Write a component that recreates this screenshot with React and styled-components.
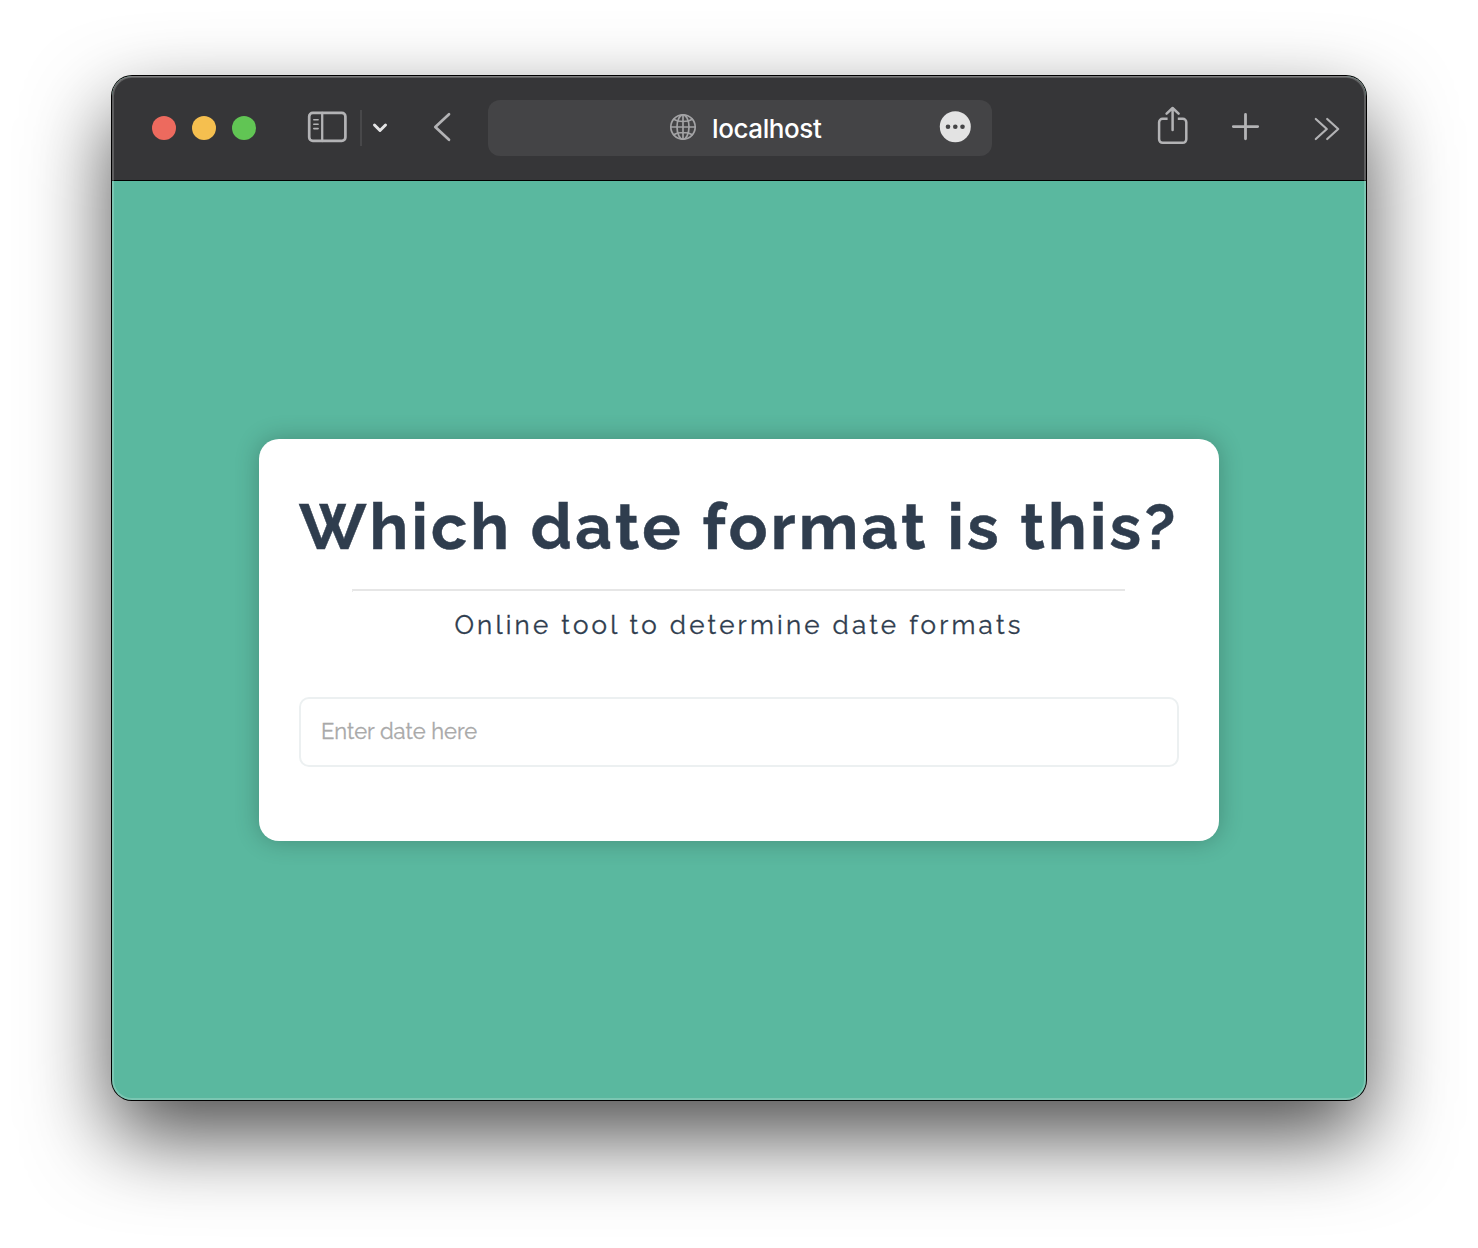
import React from "react";
import styled, { createGlobalStyle } from "styled-components";

const Global = createGlobalStyle`
  * { box-sizing: border-box; }
  body { margin: 0; background: #fff; font-family: Raleway, Lato, sans-serif; }
`;
const Desktop = styled.div`
  width: 1478px;
  height: 1248px;
  padding: 76px 112px 148px;
  overflow: hidden;
  background: #fff;
`;
const Window = styled.main`
  position: relative;
  display: flex;
  flex-direction: column;
  height: 1024px;
  border-radius: 20px;
  background: #5ab89f;
  box-shadow: 0 0 0 1px #000, 0 36px 84px rgba(0, 0, 0, 0.7);
  &::after {
    content: "";
    position: absolute;
    inset: 0;
    border-radius: 20px;
    pointer-events: none;
    box-shadow: inset 0 0 0 2px rgba(255, 255, 255, 0.2), inset 0 1px 0 rgba(255, 255, 255, 0.2);
  }
`;
const Toolbar = styled.header`
  display: flex;
  align-items: flex-start;
  height: 105px;
  flex: none;
  padding: 24px 22px 0 40px;
  border-bottom: 1px solid #000;
  border-radius: 20px 20px 0 0;
  background: #363638;
`;
const Lights = styled.div`
  display: flex;
  gap: 16px;
  padding-top: 16px;
`;
const Light = styled.span`
  width: 24px;
  height: 24px;
  border-radius: 50%;
  background: ${(p) => p.$color};
`;
const Icon = styled.svg`
  flex: none;
  display: block;
  width: ${(p) => p.$w}px;
  height: 56px;
  margin-left: ${(p) => p.$gap || 0}px;
  fill: none;
  stroke: ${(p) => p.$color || "#b3b3b5"};
  stroke-width: ${(p) => p.$stroke || 2.5};
  stroke-linecap: round;
  stroke-linejoin: round;
`;
const Divider = styled.span`
  flex: none;
  width: 2px;
  height: 36px;
  margin: 10px 0 0 13px;
  background: #48484a;
`;
const Address = styled.div`
  display: flex;
  flex: none;
  width: 504px;
  height: 56px;
  margin-left: 34px;
  border-radius: 12px;
  background: #444446;
`;
const Host = styled.span`
  width: 115px;
  margin-left: 15px;
  color: #fff;
  font: 500 26px/58px Inter, sans-serif;
  letter-spacing: -0.4px;
  white-space: nowrap;
`;
const Page = styled.section`
  display: flex;
  flex: 1;
  align-items: center;
  justify-content: center;
`;
const Card = styled.div`
  width: 960px;
  height: 402px;
  margin-bottom: 1px;
  padding: 40px;
  border-radius: 20px;
  background: #fff;
  color: #2f3d4e;
  box-shadow: 0 0 24px rgba(0, 0, 0, 0.24);
`;
const Title = styled.h1`
  height: 110px;
  margin: 0;
  font-size: 64px;
  line-height: 95px;
  font-weight: 700;
  letter-spacing: 3.2px;
  white-space: nowrap;
  -webkit-text-stroke: 0.5px currentColor;
`;
const Rule = styled.hr`
  width: 773px;
  height: 3px;
  margin: 0 0 0 53px;
  border: 0 solid #e6e6e6;
  border-top-width: 2px;
  border-left: 1px solid #ececec;
`;
const Subtitle = styled.p`
  height: 105px;
  margin: 0;
  font-size: 26px;
  line-height: 66px;
  letter-spacing: 3.2px;
  text-align: center;
  white-space: nowrap;
  -webkit-text-stroke: 0.3px currentColor;
`;
const DateInput = styled.input`
  display: block;
  width: 880px;
  height: 70px;
  padding: 0 20px 2px;
  border: 2px solid #ecf0f1;
  border-radius: 10px;
  outline: none;
  background: #fff;
  color: #2f3d4e;
  font: 400 22px Raleway, Lato, sans-serif;
  -webkit-text-stroke: 0.3px #a9a9a9;
  &::placeholder { color: #a9a9a9; opacity: 1; }
`;

export default function App() {
  return (
    <>
      <Global />
      <Desktop>
        <Window>
          <Toolbar>
            <Lights>
              <Light $color="#ed6a5e" />
              <Light $color="#f5bf4f" />
              <Light $color="#61c554" />
            </Lights>
            <Icon $w={40} $gap={51} $stroke={2.7} viewBox="307 100 40 56">
              <rect x="309.2" y="112.8" width="36.2" height="28" rx="3.6" />
              <path d="M322.2 113v28" strokeWidth="2.3" />
              <path d="M313.8 119.7h4.3M313.8 124.2h4.3M313.8 128.6h4.3" strokeWidth="1.6" />
            </Icon>
            <Divider />
            <Icon $w={20} $gap={8} $color="#e4e4e5" $stroke={3} viewBox="370 100 20 56">
              <path d="m374.5 125 5.5 5.5 5.5-5.5" />
            </Icon>
            <Icon $w={24} $gap={40} $stroke={2.7} viewBox="430 100 24 56">
              <path d="M449 114.2 435.3 127 449 139.8" />
            </Icon>
            <Address>
              <Icon $w={28} $gap={181} $color="#a3a3a5" $stroke={1.7} viewBox="669 100 28 56">
                <circle cx="683" cy="127" r="12.2" />
                <ellipse cx="683" cy="127" rx="6" ry="12.2" />
                <path d="M683 114.8v24.4M670.8 127h24.4M673.6 119.2c4.8 3.1 14 3.1 18.8 0M673.6 134.8c4.8-3.1 14-3.1 18.8 0" />
              </Icon>
              <Host>localhost</Host>
              <Icon $w={32} $gap={112} viewBox="939 100 32 56">
                <circle cx="955.3" cy="126.7" r="15.5" fill="#e3e3e3" stroke="none" />
                <g fill="#444446" stroke="none">
                  <circle cx="948" cy="126.8" r="2.3" />
                  <circle cx="955.3" cy="126.8" r="2.3" />
                  <circle cx="962.5" cy="126.8" r="2.3" />
                </g>
              </Icon>
            </Address>
            <Icon $w={34} $gap={164} $stroke={2.5} viewBox="1156 100 34 56">
              <path d="M1167.6 118.8h-5a3.5 3.5 0 0 0-3.5 3.5v17a3.5 3.5 0 0 0 3.5 3.5h20.2a3.5 3.5 0 0 0 3.5-3.5v-17a3.5 3.5 0 0 0-3.5-3.5h-5" strokeLinecap="butt" />
              <path d="M1172.6 130v-21.6M1166.6 113.6l6-5.6 6 5.6" />
            </Icon>
            <Icon $w={30} $gap={40} $stroke={2.8} viewBox="1230 100 30 56">
              <path d="M1233.3 126.6h24.4M1245.5 114.4v24.4" />
            </Icon>
            <Icon $w={30} $gap={52} $stroke={2.2} viewBox="1312 100 30 56">
              <path d="m1315.8 119 11 10-11 10M1327.2 119l11 10-11 10" />
            </Icon>
          </Toolbar>
          <Page>
            <Card>
              <Title>Which date format is this?</Title>
              <Rule />
              <Subtitle>Online tool to determine date formats</Subtitle>
              <DateInput placeholder="Enter date here" />
            </Card>
          </Page>
        </Window>
      </Desktop>
    </>
  );
}
